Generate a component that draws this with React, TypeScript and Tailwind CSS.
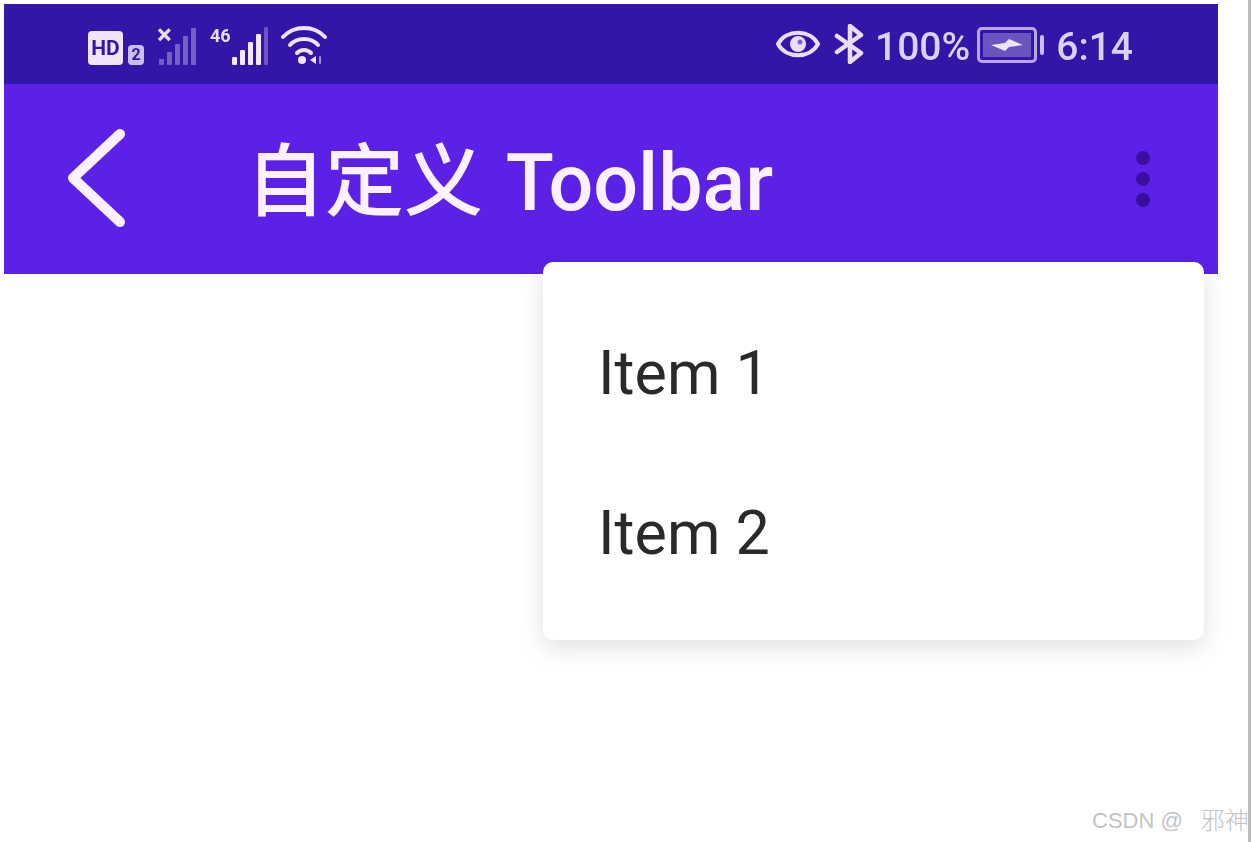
function SignalBars({ dim }: { dim?: boolean }) {
  const bars = dim
    ? [
        { x: 1, h: 6 },
        { x: 9, h: 13 },
        { x: 17, h: 21 },
        { x: 25, h: 29 },
        { x: 33, h: 37 },
      ]
    : [
        { x: 1, h: 8 },
        { x: 9, h: 15 },
        { x: 17, h: 23 },
        { x: 25, h: 31 },
      ];
  return (
    <svg width="40" height="38" viewBox="0 0 40 38">
      {bars.map((b) => (
        <rect
          key={b.x}
          x={b.x}
          y={38 - b.h}
          width="5"
          height={b.h}
          rx="1"
          fill="#f3e8ff"
          opacity={dim ? 0.35 : 1}
        />
      ))}
      {!dim && <rect x="33" y="0" width="4" height="38" rx="1" fill="#f3e8ff" opacity="0.3" />}
    </svg>
  );
}

function StatusBar() {
  return (
    <div className="flex h-20 items-center bg-[#3316a8] pl-[84px] pr-[85px] text-[#e9ddf9]">
      {/* left icons */}
      <div className="flex items-end blur-[0.6px]">
        <div className="flex h-[34px] w-[35px] items-center justify-center rounded-[4px] bg-[#efe4fb] text-[21px] leading-none font-bold text-[#3316a8]">
          HD
        </div>
        <div className="ml-[5px] flex h-[20px] w-[16px] items-center justify-center rounded-[4px] bg-[#cbbdf0] text-[16px] leading-none font-bold text-[#3316a8]">
          2
        </div>
        <div className="relative ml-[14px] h-[38px] w-[40px]">
          <SignalBars dim />
          <span className="absolute -top-[6px] -left-[1px] text-[28px] leading-none font-bold">×</span>
        </div>
        <div className="relative ml-[12px] h-[38px] w-[60px]">
          <span className="absolute top-0 left-0 text-[18px] leading-none font-bold">46</span>
          <div className="absolute bottom-0 left-[21px]">
            <SignalBars />
          </div>
        </div>
        <svg className="ml-[11px]" width="46" height="42" viewBox="0 0 46 42" fill="none" stroke="#efe4fb" strokeWidth="4" strokeLinecap="round">
          <path d="M2 14 C13 2 33 2 44 14" />
          <path d="M9 22 C16 14 30 14 37 22" />
          <path d="M16 30 C20 26 26 26 30 30" />
          <circle cx="21" cy="37" r="4" fill="#efe4fb" stroke="none" />
          <path d="M35 33 L35 41 L29 37 Z" fill="#efe4fb" stroke="none" />
          <path d="M39 34 L39 40" strokeWidth="2" opacity="0.6" />
        </svg>
      </div>

      {/* right icons */}
      <div className="ml-auto flex items-center pt-[6px] blur-[0.6px]">
        <svg className="-mt-[6px]" width="44" height="36" viewBox="0 0 44 36" fill="none" stroke="#e9ddf9" strokeWidth="4">
          <path d="M2 18 C10 3 34 3 42 18 C34 33 10 33 2 18 Z" strokeLinejoin="round" />
          <circle cx="22" cy="18" r="8" fill="#e9ddf9" stroke="none" />
          <circle cx="24" cy="16" r="2.5" fill="#7a63c9" stroke="none" />
        </svg>
        <svg className="-mt-[6px] ml-[14px]" width="32" height="40" viewBox="0 0 32 40" fill="none" stroke="#e9ddf9" strokeWidth="4.5" strokeLinecap="round" strokeLinejoin="round">
          <path d="M3 12 L27 29 L16 38 L16 2 L27 11 L3 28" />
        </svg>
        <span className="ml-[9px] text-[39px] leading-none font-medium text-[#ddd0f5]">100%</span>
        <div className="-mt-[5px] ml-[7px] flex h-[36px] w-[60px] items-center rounded-[5px] border-[3px] border-[#b9a6ea] p-[3px]">
          <div className="flex h-full w-full items-center justify-center bg-[#6a55c0]">
            <svg width="32" height="12" viewBox="0 0 32 12">
              <path d="M0 6 L14 4 L18 0 L32 6 L18 8 L14 12 Z" fill="#efe4fb" />
            </svg>
          </div>
        </div>
        <div className="-mt-[5px] ml-[3px] h-[20px] w-[4px] rounded-[2px] bg-[#cdbdf2]" />
        <span className="ml-[12px] text-[39px] leading-none font-medium text-[#ddd0f5]">6:14</span>
      </div>
    </div>
  );
}

function Toolbar() {
  return (
    <div className="flex h-[190px] items-center bg-[#5b21e6] text-[#fbf1ff]">
      <svg className="ml-[61px] shrink-0 blur-[0.5px]" width="66" height="104" viewBox="0 0 66 104" fill="none" stroke="#fbf1ff" strokeWidth="10" strokeLinecap="round" strokeLinejoin="round">
        <path d="M55 7 L8 51 L55 95" />
      </svg>
      <h1 className="mt-[8px] ml-[115px] text-[79px] leading-none font-medium [word-spacing:3px] blur-[0.5px]">自定义 Toolbar</h1>
      <div className="mr-[68px] ml-auto flex flex-col gap-[7px] blur-[0.5px]">
        <span className="size-[14px] rounded-full bg-[#3a0f9e]" />
        <span className="size-[14px] rounded-full bg-[#3a0f9e]" />
        <span className="size-[14px] rounded-full bg-[#3a0f9e]" />
      </div>
    </div>
  );
}

export default function App() {
  return (
    <div
      className="flex h-[842px] w-full overflow-hidden bg-white"
      style={{ fontFamily: 'Roboto, "Noto Sans CJK SC", sans-serif' }}
    >
      <div className="relative w-[1248px] shrink-0 overflow-hidden pt-1 pl-1">
        <div className="w-[1214px]">
          <StatusBar />
          <Toolbar />
        </div>

        {/* Overflow menu */}
        <div className="absolute top-[262px] left-[543px] flex h-[378px] w-[661px] flex-col justify-center gap-[100px] rounded-[10px] bg-white pt-[4px] pl-[55px] text-[#2a2a2a] shadow-[0_8px_24px_rgba(0,0,0,0.12)]">
          <p className="text-[61px] leading-[60px] blur-[0.5px]">Item 1</p>
          <p className="text-[61px] leading-[60px] blur-[0.5px]">Item 2</p>
        </div>

        {/* Watermark */}
        <span
          className="absolute top-[807px] left-[1092px] flex items-center text-[22px] leading-[28px] whitespace-nowrap text-[#c4c4c4]"
          style={{ fontFamily: '"Liberation Sans", "Noto Sans CJK SC", sans-serif' }}
        >
          CSDN @
          <span className="ml-[18px] text-[24px] font-light">邪神</span>
        </span>
      </div>
      <div className="w-[3px] shrink-0 bg-[#bdbdbd]" />
    </div>
  );
}
